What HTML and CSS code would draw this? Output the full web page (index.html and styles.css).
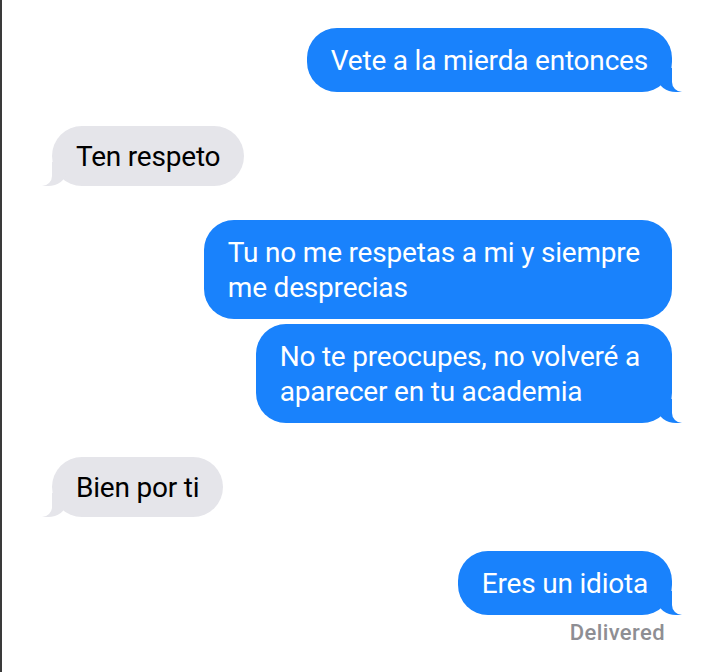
FILE: index.html
```html
<!DOCTYPE html>
<html lang="es">
<head>
  <meta charset="UTF-8">
  <meta name="viewport" content="width=device-width, initial-scale=1.0">
  <title>Mensajes</title>
  <link rel="stylesheet" href="styles.css">
</head>
<body>
  <div class="thread">
    <!-- Sent -->
    <div class="group sent">
      <div class="bubble tail">Vete a la mierda entonces</div>
    </div>

    <!-- Received -->
    <div class="group received">
      <div class="bubble tail">Ten respeto</div>
    </div>

    <div class="group sent">
      <div class="bubble wrapped">Tu no me respetas a mi y siempre<br>me desprecias</div>
      <div class="bubble wrapped tail">No te preocupes, no volveré a<br>aparecer en tu academia</div>
    </div>

    <div class="group received">
      <div class="bubble tail">Bien por ti</div>
    </div>

    <div class="group sent">
      <div class="bubble tail">Eres un idiota</div>
      <div class="status">Delivered</div>
    </div>
  </div>
</body>
</html>
```

FILE: styles.css
```css
/* Global Styles */
* {
  margin: 0;
  padding: 0;
  box-sizing: border-box;
}

body {
  background-color: #ffffff;
  border-left: 2px solid #3a3a3a;
  min-height: 100vh;
  font-family: Roboto, 'Liberation Sans', sans-serif;
}

/* Thread */
.thread {
  display: flex;
  flex-direction: column;
  gap: 34px;
  padding: 28px 48px 0 50px;
}

.group {
  display: flex;
  flex-direction: column;
  gap: 5px;
}

.group.sent {
  align-items: flex-end;
}

.group.received {
  align-items: flex-start;
}

/* Bubbles */
.bubble {
  position: relative;
  padding: 15px 24px 14px;
  font-size: 28px;
  line-height: 35px;
  letter-spacing: -0.2px;
  border-radius: 30px;
  white-space: nowrap;
}

.bubble.wrapped {
  padding-right: 32px;
}

.sent .bubble {
  background-color: #1982fc;
  color: #ffffff;
}

.received .bubble {
  padding: 13px 24px 12px;
  background-color: #e5e5ea;
  color: #000000;
}

/* Tails */
.bubble.tail::before,
.bubble.tail::after {
  content: "";
  position: absolute;
  bottom: 0;
  height: 24px;
}

.sent .bubble.tail::before {
  right: -10px;
  width: 24px;
  background-color: #1982fc;
  border-bottom-left-radius: 18px 14px;
}

.sent .bubble.tail::after {
  right: -26px;
  width: 26px;
  background-color: #ffffff;
  border-bottom-left-radius: 10px;
}

.received .bubble.tail::before {
  left: -10px;
  width: 24px;
  background-color: #e5e5ea;
  border-bottom-right-radius: 18px 14px;
}

.received .bubble.tail::after {
  left: -26px;
  width: 26px;
  background-color: #ffffff;
  border-bottom-right-radius: 10px;
}

/* Status */
.status {
  margin-right: 7px;
  font-size: 22px;
  line-height: 26px;
  font-weight: 500;
  letter-spacing: 0.4px;
  color: #8e8e93;
}
```
